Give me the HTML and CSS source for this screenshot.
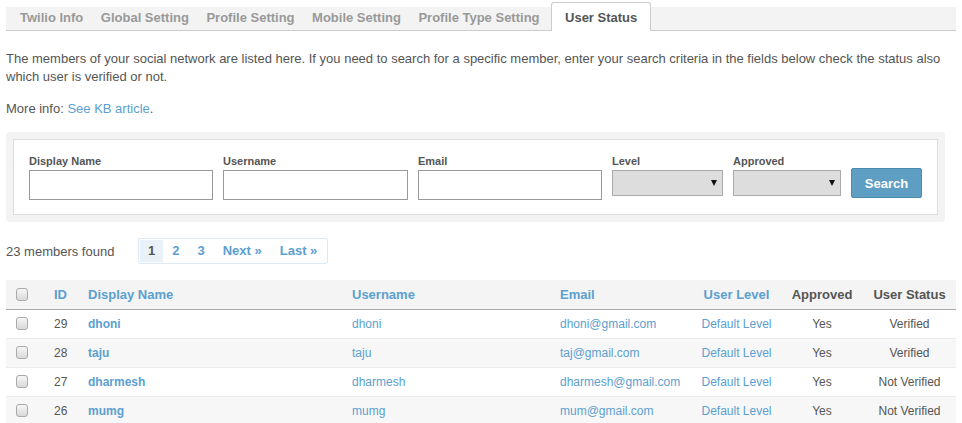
FILE: index.html
```html
<!DOCTYPE html>
<html>
<head>
<meta charset="utf-8">
<link rel="stylesheet" href="styles.css">
</head>
<body>
<nav class="tabs">
  <a class="tab">Twilio Info</a>
  <a class="tab">Global Setting</a>
  <a class="tab">Profile Setting</a>
  <a class="tab">Mobile Setting</a>
  <a class="tab">Profile Type Setting</a>
  <a class="tab active">User Status</a>
</nav>

<p class="intro">The members of your social network are listed here. If you need to search for a specific member, enter your search criteria in the fields below check the status also which user is verified or not.</p>
<p class="more">More info: <a class="link">See KB article</a>.</p>

<div class="search-outer">
  <form class="search-inner">
    <div class="field"><label>Display Name</label><input class="text" type="text"></div>
    <div class="field"><label>Username</label><input class="text wide" type="text"></div>
    <div class="field"><label>Email</label><input class="text" type="text"></div>
    <div class="field"><label>Level</label><span class="sel sel-level"><select></select></span></div>
    <div class="field"><label>Approved</label><span class="sel sel-appr"><select></select></span></div>
    <button class="btn" type="button">Search</button>
  </form>
</div>

<div class="pager-row">
  <span class="count">23 members found</span>
  <div class="pager">
    <span class="pg current">1</span>
    <a class="pg">2</a>
    <a class="pg">3</a>
    <a class="pg">Next »</a>
    <a class="pg">Last »</a>
  </div>
</div>

<table class="members">
  <colgroup>
    <col class="c1"><col class="c2"><col class="c3"><col class="c4"><col class="c5"><col class="c6"><col class="c7"><col class="c8">
  </colgroup>
  <thead>
    <tr>
      <th><input type="checkbox" class="cb"></th>
      <th class="sort">ID</th>
      <th class="sort">Display Name</th>
      <th class="sort">Username</th>
      <th class="sort">Email</th>
      <th class="sort center">User Level</th>
      <th class="center">Approved</th>
      <th class="center">User Status</th>
    </tr>
  </thead>
  <tbody>
    <tr>
      <td><input type="checkbox" class="cb"></td>
      <td>29</td>
      <td class="name">dhoni</td>
      <td class="blue">dhoni</td>
      <td class="blue">dhoni@gmail.com</td>
      <td class="blue center">Default Level</td>
      <td class="center">Yes</td>
      <td class="center">Verified</td>
    </tr>
    <tr>
      <td><input type="checkbox" class="cb"></td>
      <td>28</td>
      <td class="name">taju</td>
      <td class="blue">taju</td>
      <td class="blue">taj@gmail.com</td>
      <td class="blue center">Default Level</td>
      <td class="center">Yes</td>
      <td class="center">Verified</td>
    </tr>
    <tr>
      <td><input type="checkbox" class="cb"></td>
      <td>27</td>
      <td class="name">dharmesh</td>
      <td class="blue">dharmesh</td>
      <td class="blue">dharmesh@gmail.com</td>
      <td class="blue center">Default Level</td>
      <td class="center">Yes</td>
      <td class="center">Not Verified</td>
    </tr>
    <tr>
      <td><input type="checkbox" class="cb"></td>
      <td>26</td>
      <td class="name">mumg</td>
      <td class="blue">mumg</td>
      <td class="blue">mum@gmail.com</td>
      <td class="blue center">Default Level</td>
      <td class="center">Yes</td>
      <td class="center">Not Verified</td>
    </tr>
  </tbody>
</table>
</body>
</html>
```

FILE: styles.css
```css
* { box-sizing: border-box; }
html, body { margin: 0; background: #fff; }
body {
  padding: 7px 6px 0 6px;
  font-family: "Liberation Sans", Arial, sans-serif;
  font-size: 13px;
  color: #555;
}

/* tabs */
.tabs {
  display: flex;
  height: 24px;
  background: #f3f3f3;
  border-bottom: 1px solid #cccccc;
  padding-left: 6px;
  align-items: flex-start;
}
.tab {
  display: block;
  padding: 0 8px;
  margin-right: 1.5px;
  line-height: 22px;
  font-weight: bold;
  color: #999;
  white-space: nowrap;
}
.tab.active {
  margin-top: -5px;
  margin-left: 2px;
  height: 29px;
  padding: 4px 13px 0 13px;
  background: #fff;
  border: 1px solid #cccccc;
  border-bottom: none;
  border-radius: 3px 3px 0 0;
  color: #555;
}

/* intro */
.intro {
  margin: 19px 10px 14px 0;
  line-height: 18px;
}
.more {
  margin: 0 0 14px 0;
  line-height: 18px;
}
.link { color: #5ba0d0; }

/* search */
.search-outer {
  margin-right: 11px;
  background: #f3f3f3;
  border-radius: 4px;
  padding: 7px;
}
.search-inner {
  margin: 0;
  background: #fff;
  border: 1px solid #dddddd;
  padding: 14px 15px 14px 15px;
  display: flex;
  align-items: flex-start;
  gap: 10px;
}
.field { display: flex; flex-direction: column; }
.field label {
  font-size: 11px;
  font-weight: bold;
  line-height: 14px;
  margin-bottom: 2px;
  color: #555;
}
.text {
  width: 184px;
  height: 30px;
  border: 1px solid #999;
  border-radius: 0;
  background: #fff;
  padding: 0 4px;
  margin: 0;
  font: inherit;
}
.text.wide { width: 185px; }
.sel { position: relative; display: block; }
.sel select {
  appearance: none;
  -webkit-appearance: none;
  display: block;
  height: 26px;
  background: #dddddd;
  border: 1px solid #aaa;
  border-radius: 0;
  margin: 0;
}
.sel-level select { width: 111px; }
.sel-appr select { width: 108px; }
.sel::after {
  content: "";
  position: absolute;
  right: 6px;
  top: 10px;
  border-left: 3px solid transparent;
  border-right: 3px solid transparent;
  border-top: 6px solid #111;
}
.btn {
  margin-top: 14px;
  width: 72px;
  height: 30px;
  background: #5e9ec2;
  border: 1px solid #4d89ac;
  border-radius: 2px;
  color: #fff;
  font-family: inherit;
  font-size: 13px;
  font-weight: bold;
  padding: 0;
}

/* pager */
.pager-row {
  display: flex;
  align-items: center;
  margin-top: 16px;
  height: 26px;
}
.count { width: 132px; }
.pager {
  display: flex;
  align-items: center;
  height: 26px;
  border: 1px solid #dbeaf5;
  border-radius: 2px;
  padding: 1px;
  gap: 0;
}
.pg {
  display: block;
  height: 22px;
  line-height: 22px;
  padding: 0 9px;
  font-weight: bold;
  color: #5ba0d0;
}
.pg.current {
  background: #e9f2f9;
  color: #555;
  padding: 0 8px;
}

/* table */
.members {
  margin-top: 16px;
  width: 950px;
  border-collapse: collapse;
  table-layout: fixed;
}
.c1 { width: 38px; }
.c2 { width: 34px; }
.c3 { width: 264px; }
.c4 { width: 208px; }
.c5 { width: 142px; }
.c6 { width: 89px; }
.c7 { width: 82px; }
.c8 { width: 93px; }
.members th {
  height: 29px;
  background: #f4f4f4;
  border-bottom: 1px solid #aaa;
  text-align: left;
  font-weight: bold;
  font-size: 13px;
  color: #555;
  padding: 0 0 0 10px;
  white-space: nowrap;
}
.members th.sort { color: #5ba0d0; }
.members td {
  height: 29px;
  padding: 0 0 0 10px;
  border-top: 1px solid #ececec;
  white-space: nowrap;
  font-size: 12px;
  color: #555;
}
.members tbody tr:nth-child(even) td { background: #f7f7f7; }
.members tbody tr:first-child td { border-top: none; }
.members .center { text-align: center; padding: 0; }
.members td.blue { color: #5ba0d0; }
.members td.name { color: #5ba0d0; font-weight: bold; }
.cb {
  appearance: none;
  -webkit-appearance: none;
  display: block;
  margin: 0;
  width: 12px;
  height: 13px;
  border: 1px solid #aaa;
  border-radius: 3px;
  background: linear-gradient(#f6f6f6, #d9d9d9);
}
```
